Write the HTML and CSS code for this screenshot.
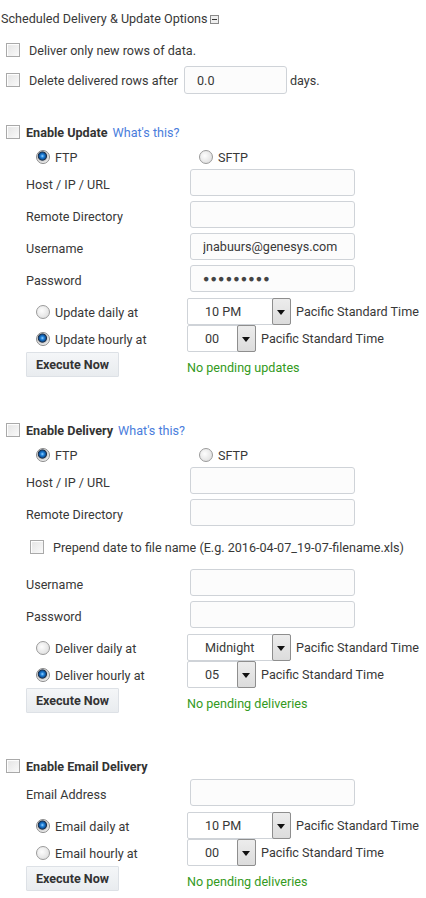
FILE: index.html
```html
<!DOCTYPE html>
<html>
<head>
<meta charset="utf-8">
<link rel="stylesheet" href="styles.css">
</head>
<body>
<div class="title"><span>Scheduled Delivery &amp; Update Options</span><span class="collapse"></span></div>

<div class="opt-row r1"><span class="cb"></span><span>Deliver only new rows of data.</span></div>
<div class="opt-row r2"><span class="cb"></span><span>Delete delivered rows after</span><input class="days" type="text" value="0.0"><span class="unit">days.</span></div>

<!-- Update -->
<div class="sec s-update">
  <div class="sec-head"><span class="cb"></span><b>Enable Update</b><a class="link">What's this?</a></div>
  <div class="proto">
    <div class="opt"><span class="rb on"></span>FTP</div>
    <div class="opt"><span class="rb"></span>SFTP</div>
  </div>
  <div class="field first"><label>Host / IP / URL</label><input type="text"></div>
  <div class="field"><label>Remote Directory</label><input type="text"></div>
  <div class="field"><label>Username</label><input type="text" value="jnabuurs@genesys.com"></div>
  <div class="field"><label>Password</label><input class="pw" type="text" value="●●●●●●●●●"></div>
  <div class="sched first"><div class="rl"><span class="rb"></span>Update daily at</div><div class="select wide"><span class="val">10 PM</span><span class="arrow"></span></div><span class="tz">Pacific Standard Time</span></div>
  <div class="sched"><div class="rl"><span class="rb on"></span>Update hourly at</div><div class="select narrow"><span class="val">00</span><span class="arrow"></span></div><span class="tz">Pacific Standard Time</span></div>
  <div class="actions"><button>Execute Now</button><span class="status">No pending updates</span></div>
</div>

<!-- Delivery -->
<div class="sec s-delivery">
  <div class="sec-head"><span class="cb"></span><b>Enable Delivery</b><a class="link">What's this?</a></div>
  <div class="proto">
    <div class="opt"><span class="rb on"></span>FTP</div>
    <div class="opt"><span class="rb"></span>SFTP</div>
  </div>
  <div class="field first"><label>Host / IP / URL</label><input type="text"></div>
  <div class="field"><label>Remote Directory</label><input type="text"></div>
  <div class="prepend"><span class="cb"></span><span>Prepend date to file name (E.g. 2016-04-07_19-07-filename.xls)</span></div>
  <div class="field after-prepend"><label>Username</label><input type="text"></div>
  <div class="field"><label>Password</label><input type="text"></div>
  <div class="sched first"><div class="rl"><span class="rb"></span>Deliver daily at</div><div class="select wide"><span class="val">Midnight</span><span class="arrow"></span></div><span class="tz">Pacific Standard Time</span></div>
  <div class="sched"><div class="rl"><span class="rb on"></span>Deliver hourly at</div><div class="select narrow"><span class="val">05</span><span class="arrow"></span></div><span class="tz">Pacific Standard Time</span></div>
  <div class="actions"><button>Execute Now</button><span class="status">No pending deliveries</span></div>
</div>

<!-- Email -->
<div class="sec s-email">
  <div class="sec-head"><span class="cb"></span><b>Enable Email Delivery</b></div>
  <div class="field email"><label>Email Address</label><input type="text"></div>
  <div class="sched first"><div class="rl"><span class="rb on"></span>Email daily at</div><div class="select wide"><span class="val">10 PM</span><span class="arrow"></span></div><span class="tz">Pacific Standard Time</span></div>
  <div class="sched"><div class="rl"><span class="rb"></span>Email hourly at</div><div class="select narrow"><span class="val">00</span><span class="arrow"></span></div><span class="tz">Pacific Standard Time</span></div>
  <div class="actions"><button>Execute Now</button><span class="status">No pending deliveries</span></div>
</div>
</body>
</html>
```

FILE: styles.css
```css
* { box-sizing: border-box; }
body {
  margin: 0;
  font-family: Roboto, "Liberation Sans", sans-serif;
  font-size: 12.6px;
  color: #383838;
  background: #fff;
}
.title {
  margin-top: 8px;
  height: 20px;
  display: flex;
  align-items: center;
  padding-left: 1px;
}
.collapse {
  position: relative;
  width: 9px;
  height: 9px;
  margin-left: 2px;
  margin-top: 2px;
  border: 1px solid #8a8a8a;
  background: #eee;
}
.collapse::after {
  content: "";
  position: absolute;
  left: 1px;
  top: 3px;
  width: 5px;
  height: 1px;
  background: #333;
}
.cb {
  display: inline-block;
  flex: none;
  width: 14px;
  height: 14px;
  border: 1px solid #a9a9a9;
  background: linear-gradient(135deg, #e3e3e3, #fafafa);
  box-shadow: inset 1px 1px 1px #fff;
}
.rb {
  display: inline-block;
  flex: none;
  width: 14px;
  height: 14px;
  border-radius: 50%;
  border: 1px solid #9a9a9a;
  background: radial-gradient(circle at 40% 40%, #fdfdfd, #d8d8d8);
}
.rb.on {
  border-color: #8a8a8a;
  background: radial-gradient(circle at 45% 42%, #9fd6ff 0, #2a8ae0 1.5px, #0d5aa8 3px, #1e2e45 4.2px, #d0d0d0 5px, #f4f4f4 7px);
}
.opt-row {
  display: flex;
  align-items: center;
  padding-left: 6px;
}
.opt-row .cb { margin-right: 9px; }
.r1 { margin-top: 12px; height: 20px; }
.r2 { margin-top: 6px; height: 28px; }
input {
  font-family: Roboto, "Liberation Sans", sans-serif;
  font-size: 12.6px;
  color: #383838;
  border: 1px solid #cfd3d8;
  border-radius: 3px;
  background: #fcfcfc;
  outline: none;
}
.days {
  width: 103px;
  height: 28px;
  margin-left: 6px;
  padding-left: 12px;
}
.unit { margin-left: 3px; }
.sec-head {
  display: flex;
  align-items: center;
  height: 20px;
  padding-left: 6px;
}
.sec-head .cb { margin-right: 6px; }
.sec-head b { color: #333; }
.link { color: #4a7ddc; margin-left: 5px; }
.s-update { margin-top: 28px; }
.s-delivery { margin-top: 43px; }
.s-email { margin-top: 43px; }
.proto {
  display: flex;
  height: 20px;
  margin-top: 5px;
  padding-left: 36px;
}
.proto .opt {
  width: 163px;
  display: flex;
  align-items: center;
  gap: 5px;
}
.field {
  display: flex;
  align-items: center;
  margin-top: 5px;
  padding-left: 26px;
}
.field.first { margin-top: 2px; }
.field.after-prepend { margin-top: 8px; }
.field.email { margin-top: 3px; }
.field label {
  width: 164px;
  padding-top: 3px;
}
.field input {
  width: 165px;
  height: 27px;
  padding-left: 12px;
}
.field .pw {
  font-size: 10.5px;
  letter-spacing: 1.2px;
  color: #444;
  padding-left: 12px;
}
.prepend {
  display: flex;
  align-items: center;
  height: 28px;
  margin-top: 7px;
  padding-left: 30px;
}
.prepend .cb { margin-right: 9px; }
.sched {
  display: flex;
  align-items: center;
  height: 27px;
  padding-left: 36px;
}
.sched.first { margin-top: 6px; }
.rl {
  width: 151px;
  display: flex;
  align-items: center;
  gap: 5px;
  padding-top: 1px;
}
.select {
  display: flex;
  height: 27px;
  border: 1px solid #cfd3d8;
  border-radius: 2px;
  background: #fff;
}
.select.wide { width: 104px; }
.select.narrow { width: 69px; }
.select .val {
  flex: 1;
  display: flex;
  align-items: center;
  padding-left: 17px;
}
.select .arrow {
  position: relative;
  width: 19px;
  margin: -1px -1px -1px 0;
  border: 1px solid #8e8e8e;
  border-radius: 2px;
  background: linear-gradient(#ececec, #dcdcdc);
}
.select .arrow::after {
  content: "";
  position: absolute;
  left: 4px;
  top: 11px;
  border-left: 4.5px solid transparent;
  border-right: 4.5px solid transparent;
  border-top: 5px solid #111;
}
.tz { margin-left: 5px; }
.actions {
  display: flex;
  align-items: center;
  padding-left: 26px;
}
button {
  width: 93px;
  height: 25px;
  font-family: Roboto, "Liberation Sans", sans-serif;
  font-size: 12.6px;
  font-weight: bold;
  color: #333;
  border: 1px solid #dde1e6;
  border-radius: 1px;
  background: linear-gradient(#f4f6f8, #e9ecef);
  padding: 0;
}
.status {
  margin-left: 68px;
  padding-top: 6px;
  color: #339a22;
}
```
